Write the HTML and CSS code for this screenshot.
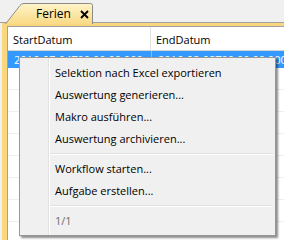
FILE: index.html
```html
<!DOCTYPE html>
<html>

<head>
    <link rel="stylesheet" href="styles.css">
</head>

<body>

    <div class="tabbar">
        <div class="tab">
            <svg class="tab-shape" width="90" height="21" viewBox="0 0 90 21">
                <defs>
                    <linearGradient id="tabfill" x1="0" y1="0" x2="0" y2="1">
                        <stop offset="0" stop-color="#fef4c9"/>
                        <stop offset="1" stop-color="#f9da86"/>
                    </linearGradient>
                </defs>
                <path d="M0.5 21 L15 2.5 Q16.5 0.5 19 0.5 L85.5 0.5 Q87.5 0.5 87.5 2.5 L87.5 21" fill="url(#tabfill)" stroke="#8c8c8c"/>
            </svg>
            <span class="tab-title">Ferien</span>
            <svg class="tab-close" width="9" height="9" viewBox="0 0 9 9">
                <path d="M1 1 L8 8 M8 1 L1 8" stroke="#000" stroke-width="1.8"/>
            </svg>
        </div>
    </div>

    <div class="panel">
        <div class="grid">
            <div class="grid-head">
                <div class="col col-start">StartDatum</div>
                <div class="col col-end">EndDatum</div>
            </div>
            <div class="grid-row selected">
                <div class="col col-start">2016-07-04T00:00:00.000</div>
                <div class="col col-end">2016-08-08T00:00:00.000</div>
            </div>
            <div class="grid-row"></div>
            <div class="grid-row"></div>
            <div class="grid-row"></div>
            <div class="grid-row"></div>
            <div class="grid-row"></div>
            <div class="grid-row"></div>
            <div class="grid-row"></div>
            <div class="grid-row"></div>
        </div>
    </div>

    <ul class="menu">
        <li class="menu-item">Selektion nach Excel exportieren</li>
        <li class="menu-item">Auswertung generieren...</li>
        <li class="menu-item">Makro ausführen...</li>
        <li class="menu-item">Auswertung archivieren...</li>
        <li class="menu-sep"></li>
        <li class="menu-item">Workflow starten...</li>
        <li class="menu-item">Aufgabe erstellen...</li>
        <li class="menu-sep"></li>
        <li class="menu-item disabled">1/1</li>
    </ul>

</body>

</html>
```

FILE: styles.css
```css
body {
    margin: 0;
    width: 284px;
    height: 240px;
    overflow: hidden;
    background-color: #f0f0f0;
    font-family: "Open Sans", "Noto Sans", Arial, sans-serif;
    font-size: 11px;
    color: #000;
}

.tabbar {
    height: 23px;
    border-bottom: 1px solid #a0a0a0;
    box-sizing: border-box;
    position: relative;
}

.tab {
    position: absolute;
    left: 5px;
    top: 3px;
    width: 90px;
    height: 21px;
}

.tab-shape {
    position: absolute;
    left: 0;
    top: 0;
}

.tab-title {
    position: absolute;
    left: 31px;
    top: 2px;
    font-size: 12px;
    line-height: 17px;
}

.tab-close {
    position: absolute;
    left: 75px;
    top: 7px;
}

.panel {
    margin-left: 2px;
    height: 214px;
    border-top: 3px solid #f9d77e;
    border-left: 5px solid #f9d77e;
    background-color: #fff;
}

.grid {
    height: 100%;
    overflow: hidden;
    border-top: 1px solid #a0a0a0;
    border-left: 1px solid #a0a0a0;
    box-sizing: border-box;
}

.grid-head {
    display: flex;
    height: 23px;
    border-bottom: 1px solid #d5d5d5;
    background-color: #fff;
}

.grid-head .col {
    line-height: 25px;
    padding-left: 5px;
}

.col-start {
    width: 137px;
    border-right: 1px solid #e3e3e3;
}

.col-end {
    flex: 1;
    padding-left: 5px;
}

.grid-row {
    display: flex;
    height: 22px;
    border-bottom: 1px solid #efefef;
    box-sizing: border-box;
}

.grid-row .col {
    padding-left: 6px;
    line-height: 17px;
    white-space: nowrap;
    overflow: hidden;
}

.grid-row.selected {
    height: 17px;
    background-color: #3399ff;
    color: #fff;
    border-bottom: none;
}

.grid-row.selected .col-start {
    border-right: 1px solid #7fbfff;
}

.menu {
    position: absolute;
    left: 19px;
    top: 57px;
    width: 257px;
    margin: 0;
    padding: 4px 2px 3px 2px;
    list-style-type: none;
    box-sizing: border-box;
    background-color: #f0f0f0;
    border: 1px solid #979797;
    box-shadow: 2px 2px 2px rgba(0, 0, 0, 0.45);
    background-image: linear-gradient(to right, transparent 28px, #e2e2e2 28px, #e2e2e2 29px, #fff 29px, #fff 30px, transparent 30px);
}

.menu-item {
    height: 22px;
    line-height: 22px;
    padding-left: 33px;
}

.menu-item.disabled {
    color: #6d6d6d;
}

.menu-sep {
    height: 8px;
    margin-left: 28px;
    background-image: linear-gradient(to bottom, transparent 3px, #e0e0e0 3px, #e0e0e0 4px, #fff 4px, #fff 5px, transparent 5px);
}
```
